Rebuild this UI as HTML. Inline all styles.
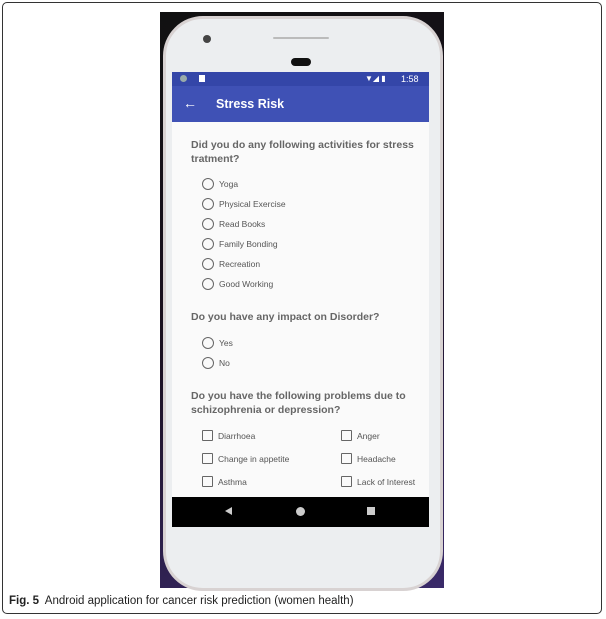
<!DOCTYPE html><html><head><style>
body{margin:0;width:606px;height:619px;background:#fff;position:relative;overflow:hidden;font-family:"Liberation Sans",sans-serif}
.frame{position:absolute;left:2px;top:2px;width:600px;height:612px;border:1px solid #333;border-radius:5px;box-sizing:border-box}
.bg{position:absolute;left:160px;top:12px;width:284px;height:576px;background:linear-gradient(160deg,#111 0%,#1a1020 50%,#3a2a6a 100%)}
.phone{position:absolute;left:163px;top:16px;width:280px;height:575px;background:#eceef0;border:3px solid #d8d2d2;border-radius:40px;box-sizing:border-box}
.cam{position:absolute;left:203px;top:35px;width:8px;height:8px;border-radius:50%;background:#444}
.spk{position:absolute;left:273px;top:37px;width:56px;height:2px;background:#bbb;border-radius:2px}
.ear{position:absolute;left:291px;top:58px;width:20px;height:8px;background:#111;border-radius:4px}
.status{position:absolute;left:172px;top:72px;width:257px;height:14px;background:#3446a8;color:#fff;font-size:9px}
.bar{position:absolute;left:172px;top:86px;width:257px;height:36px;background:#3f51b5;color:#fff}
.content{position:absolute;left:172px;top:122px;width:257px;height:375px;background:#fafafa;color:#555}
.nav{position:absolute;left:172px;top:497px;width:257px;height:30px;background:#000}
.q{position:absolute;left:19px;font-weight:bold;font-size:10.5px;line-height:14px;color:#666;width:230px}
.r{position:absolute;left:30px;font-size:8.5px;color:#555;display:flex;align-items:center}
.r i{display:inline-block;width:10px;height:10px;border:1.3px solid #666;border-radius:50%;margin-right:5px}
.c i{border-radius:1px;width:9px;height:9px}
.cap{position:absolute;left:9px;top:595px;font-size:11.5px;color:#222}
</style></head><body>
<div class="frame"></div>
<div class="bg"></div>
<div class="phone"></div>
<div class="cam"></div><div class="spk"></div><div class="ear"></div>
<div class="status"><span style="position:absolute;left:8px;top:3px;width:7px;height:7px;border-radius:50%;background:#9aa"></span><span style="position:absolute;left:27px;top:3px;width:6px;height:7px;background:#fff"></span><span style="position:absolute;left:193px;top:2px;font-size:8px">▼◢ ▮</span><span style="position:absolute;left:229px;top:2px">1:58</span></div>
<div class="bar"><span style="position:absolute;left:11px;top:9px;font-size:14px">←</span><span style="position:absolute;left:44px;top:11px;font-weight:bold;font-size:12.5px">Stress Risk</span></div>
<div class="content">
<div class="q" style="top:16px">Did you do any following activities for stress tratment?</div>
<div class="r" style="top:56px"><i></i>Yoga</div>
<div class="r" style="top:76px"><i></i>Physical Exercise</div>
<div class="r" style="top:96px"><i></i>Read Books</div>
<div class="r" style="top:116px"><i></i>Family Bonding</div>
<div class="r" style="top:136px"><i></i>Recreation</div>
<div class="r" style="top:156px"><i></i>Good Working</div>
<div class="q" style="top:188px">Do you have any impact on Disorder?</div>
<div class="r" style="top:215px"><i></i>Yes</div>
<div class="r" style="top:235px"><i></i>No</div>
<div class="q" style="top:267px">Do you have the following problems due to schizophrenia or depression?</div>
<div class="r c" style="top:308px"><i></i>Diarrhoea</div>
<div class="r c" style="top:331px"><i></i>Change in appetite</div>
<div class="r c" style="top:354px"><i></i>Asthma</div>
<div class="r c" style="top:308px;left:169px"><i></i>Anger</div>
<div class="r c" style="top:331px;left:169px"><i></i>Headache</div>
<div class="r c" style="top:354px;left:169px"><i></i>Lack of Interest</div>
</div>
<div class="nav"><span style="position:absolute;left:53px;top:10px;width:0;height:0;border-right:7px solid #ccc;border-top:4.5px solid transparent;border-bottom:4.5px solid transparent"></span><span style="position:absolute;left:124px;top:10px;width:9px;height:9px;border-radius:50%;background:#ccc"></span><span style="position:absolute;left:195px;top:10px;width:8px;height:8px;background:#ccc"></span></div>
<div class="cap"><b>Fig. 5</b>&nbsp; Android application for cancer risk prediction (women health)</div>
</body></html>
